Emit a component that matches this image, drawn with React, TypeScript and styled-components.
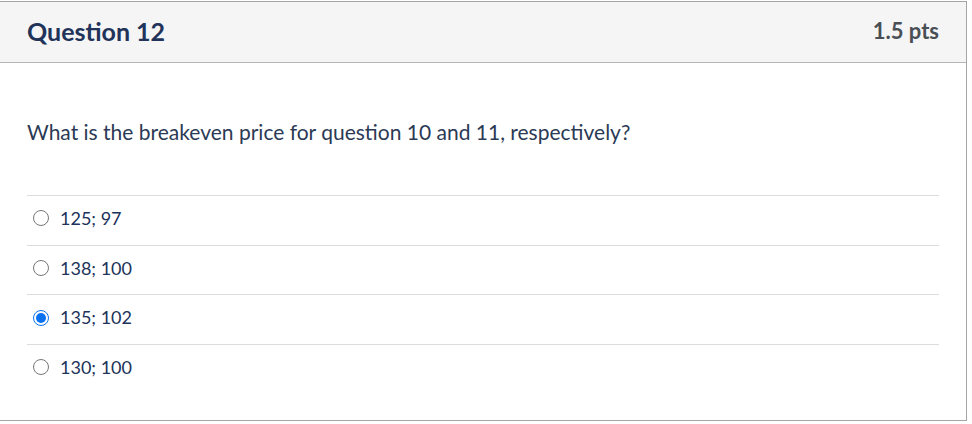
import React, { useState } from 'react'
import styled, { createGlobalStyle } from 'styled-components'

const GlobalStyle = createGlobalStyle`
  html, body {
    margin: 0;
    padding: 0;
    background: #fff;
  }
  body {
    font-family: Lato, 'Noto Sans', sans-serif;
  }
`

type Answer = {
  id: string
  label: string
}

const answers: Answer[] = [
  { id: 'a', label: '125; 97' },
  { id: 'b', label: '138; 100' },
  { id: 'c', label: '135; 102' },
  { id: 'd', label: '130; 100' }
]

const Card = styled.div`
  box-sizing: border-box;
  width: 968px;
  height: 420px;
  margin: 1px 0 0 -1px;
  border: 1px solid #a5a5a5;
  display: flex;
  flex-direction: column;
`

const Header = styled.div`
  box-sizing: border-box;
  height: 61px;
  background: #f5f5f5;
  border-bottom: 1px solid #b5b5b5;
  display: flex;
  align-items: center;
  justify-content: space-between;
  padding: 0 27px 3px 27px;
`

const Title = styled.h2`
  margin: 0;
  font-size: 25px;
  line-height: 30px;
  font-weight: 700;
  color: #22335a;
`

const Points = styled.div`
  font-size: 22px;
  line-height: 30px;
  font-weight: 700;
  color: #4a4f55;
  padding-top: 1px;
`

const Body = styled.div`
  padding: 0 27px;
`

const Prompt = styled.p`
  margin: 54px 0 0;
  font-size: 21px;
  line-height: 30px;
  color: #2b3a55;
`

const AnswerList = styled.div`
  margin-top: 48px;
  display: flex;
  flex-direction: column;
`

const Row = styled.label`
  box-sizing: border-box;
  height: 49.7px;
  padding-bottom: 5px;
  border-top: 1px solid #dcdcdc;
  display: flex;
  align-items: center;
  gap: 11px;
  padding-left: 6px;
  cursor: pointer;
`

const Radio = styled.span<{ $checked: boolean }>`
  box-sizing: border-box;
  width: 16px;
  height: 16px;
  border-radius: 50%;
  border: ${p => (p.$checked ? '1.5px solid #0a72f0' : '1px solid #777')};
  background: #fff;
  display: flex;
  align-items: center;
  justify-content: center;
  margin-top: 1px;

  &::after {
    content: '';
    display: ${p => (p.$checked ? 'block' : 'none')};
    width: 10px;
    height: 10px;
    border-radius: 50%;
    background: #0a72f0;
  }
`

const Label = styled.span`
  font-size: 18px;
  color: #20335a;
`

export default function App() {
  const [selected, setSelected] = useState('c')

  return (
    <>
      <GlobalStyle />
      <Card>
        <Header>
          <Title>Question 12</Title>
          <Points>1.5 pts</Points>
        </Header>
        <Body>
          <Prompt>What is the breakeven price for question 10 and 11, respectively?</Prompt>
          <AnswerList>
            {answers.map(a => (
              <Row key={a.id} onClick={() => setSelected(a.id)}>
                <Radio $checked={selected === a.id} />
                <Label>{a.label}</Label>
              </Row>
            ))}
          </AnswerList>
        </Body>
      </Card>
    </>
  )
}
